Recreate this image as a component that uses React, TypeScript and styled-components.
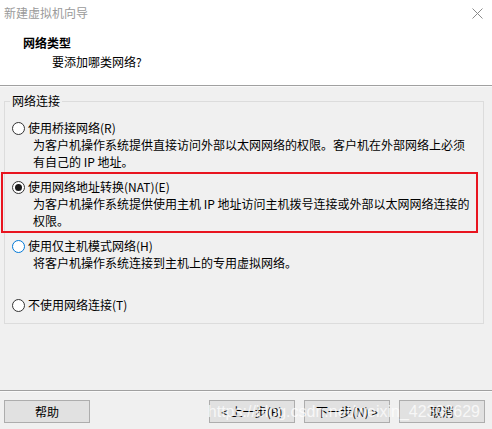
import React from 'react';
import styled, { createGlobalStyle } from 'styled-components';

const GlobalStyle = createGlobalStyle`
    html, body {
        margin: 0;
        padding: 0;
        background: #f0f0f0;
    }

    body {
        font-family: "Noto Sans CJK SC", "Liberation Sans", sans-serif;
        font-size: 12px;
        color: #000;
    }
`;

const Window = styled.div`
    width: 492px;
    height: 429px;
    display: flex;
    flex-direction: column;
    background: #f0f0f0;
    overflow: hidden;
`;

const TitleBar = styled.div`
    height: 27px;
    display: flex;
    align-items: center;
    justify-content: space-between;
    padding: 0 9px 1px 4px;
    box-sizing: border-box;
    background: #fff;
    color: #9a9a9a;
    line-height: 16px;
`;

const Header = styled.div`
    height: 59px;
    box-sizing: border-box;
    padding: 8px 0 0 23px;
    background: #fff;
    border-bottom: 1px solid #a0a0a0;
    box-shadow: 0 1px 0 #fafafa;
`;

const HeaderTitle = styled.div`
    font-weight: 700;
    line-height: 16px;
`;

const HeaderSub = styled.div`
    margin: 3px 0 0 29px;
    line-height: 16px;
`;

const Body = styled.div`
    flex: 1;
    padding: 7px 8px 0 4px;
`;

const Group = styled.fieldset`
    margin: 0;
    padding: 11px 7px 10px 7px;
    border: 1px solid #dcdcdc;
    min-inline-size: 0;
`;

const Legend = styled.legend`
    padding: 0 2px;
    margin-left: -2px;
    line-height: 16px;
`;

const Option = styled.div<{ $highlight?: boolean }>`
    position: relative;

    &:not(:last-child) {
        height: 59px;
    }

    ${({ $highlight }) =>
        $highlight &&
        `
        &::after {
            content: '';
            position: absolute;
            top: -7px;
            left: -11px;
            width: 477px;
            height: 61px;
            box-sizing: border-box;
            border: 2px solid #e8141f;
            pointer-events: none;
        }
    `}
`;

const OptionRow = styled.div`
    display: flex;
    align-items: center;
    gap: 3px;
    line-height: 16px;
`;

const Radio = styled.span<{ $checked?: boolean; $focus?: boolean }>`
    width: 13px;
    height: 13px;
    box-sizing: border-box;
    border-radius: 50%;
    border: 1px solid ${({ $focus }) => ($focus ? '#0078d7' : '#333')};
    background: #fff;
    display: flex;
    align-items: center;
    justify-content: center;

    &::before {
        content: '';
        width: 7px;
        height: 7px;
        border-radius: 50%;
        background: ${({ $checked }) => ($checked ? '#1a1a1a' : 'transparent')};
    }
`;

const Desc = styled.div`
    margin-top: 1px;
    padding-left: 21px;
    line-height: 16px;
    white-space: nowrap;
`;

const Footer = styled.div`
    position: relative;
    display: flex;
    align-items: center;
    padding: 9px 7px 6px 4px;
    border-top: 1px solid #a0a0a0;
    box-shadow: inset 0 1px 0 #fafafa;
`;

const NavGroup = styled.div`
    margin-left: auto;
    display: flex;
    gap: 9px;
`;

const Button = styled.button`
    width: 86px;
    height: 23px;
    padding: 0;
    border: 1px solid #adadad;
    background: #e1e1e1;
    font-family: "Noto Sans CJK SC", "Liberation Sans", sans-serif;
    font-size: 12px;
    color: #000;
    line-height: 16px;
`;

const Watermark = styled.div`
    position: absolute;
    right: 12px;
    bottom: 8px;
    font-family: "Liberation Sans", Arial, sans-serif;
    font-size: 16px;
    color: rgba(255, 255, 255, 0.75);
    pointer-events: none;
    white-space: nowrap;
`;

const CloseIcon = () => (
    <svg width="11" height="11" viewBox="0 0 11 11">
        <path d="M0.5 0.5 L10.5 10.5 M10.5 0.5 L0.5 10.5" stroke="#8a8a8a" strokeWidth="1" fill="none" />
    </svg>
);

interface NetOption {
    label: string;
    desc: string[];
    checked?: boolean;
    focus?: boolean;
    highlight?: boolean;
}

const options: NetOption[] = [
    {
        label: '使用桥接网络(R)',
        desc: ['为客户机操作系统提供直接访问外部以太网网络的权限。客户机在外部网络上必须', '有自己的 IP 地址。'],
    },
    {
        label: '使用网络地址转换(NAT)(E)',
        desc: ['为客户机操作系统提供使用主机 IP 地址访问主机拨号连接或外部以太网网络连接的', '权限。'],
        checked: true,
        highlight: true,
    },
    {
        label: '使用仅主机模式网络(H)',
        desc: ['将客户机操作系统连接到主机上的专用虚拟网络。'],
        focus: true,
    },
    {
        label: '不使用网络连接(T)',
        desc: [],
    },
];

export default function App() {
    return (
        <>
            <GlobalStyle />
            <Window>
                <TitleBar>
                    <span>新建虚拟机向导</span>
                    <CloseIcon />
                </TitleBar>
                <Header>
                    <HeaderTitle>网络类型</HeaderTitle>
                    <HeaderSub>要添加哪类网络?</HeaderSub>
                </Header>
                <Body>
                    <Group>
                        <Legend>网络连接</Legend>
                        {options.map((o) => (
                            <Option key={o.label} $highlight={o.highlight}>
                                <OptionRow>
                                    <Radio $checked={o.checked} $focus={o.focus} />
                                    <span>{o.label}</span>
                                </OptionRow>
                                {o.desc.map((line) => (
                                    <Desc key={line}>{line}</Desc>
                                ))}
                            </Option>
                        ))}
                    </Group>
                </Body>
                <Footer>
                    <Button>帮助</Button>
                    <NavGroup>
                        <Button>&lt; 上一步(B)</Button>
                        <Button>下一步(N) &gt;</Button>
                        <Button>取消</Button>
                    </NavGroup>
                    <Watermark>https://blog.csdn.net/weixin_42393629</Watermark>
                </Footer>
            </Window>
        </>
    );
}
